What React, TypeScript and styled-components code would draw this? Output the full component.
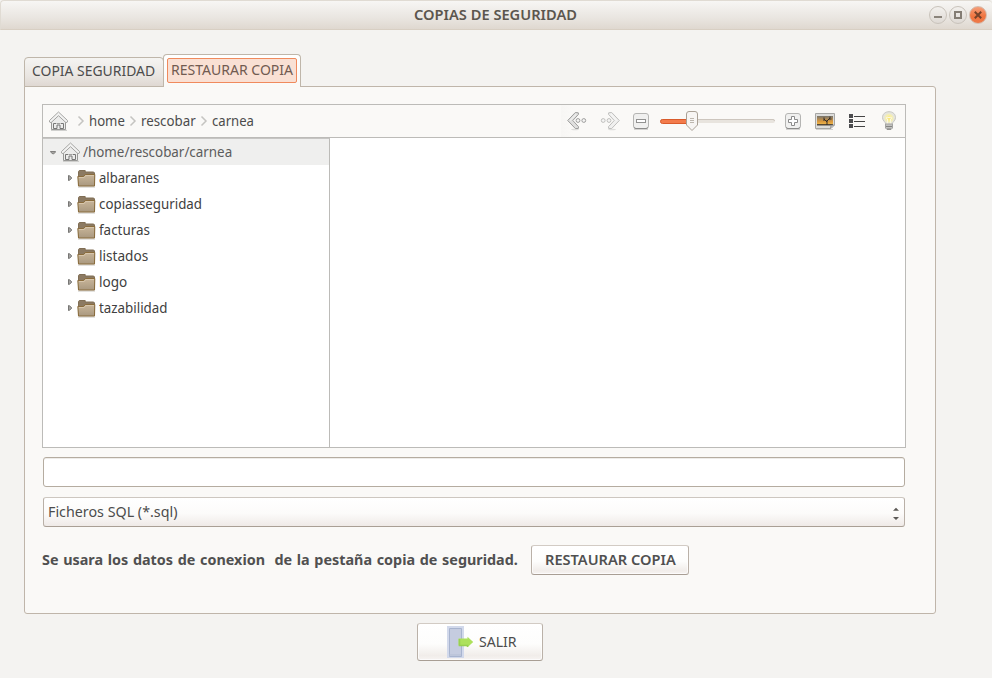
import React, { useLayoutEffect, useRef } from 'react';
import styled, { createGlobalStyle } from 'styled-components';

const GlobalStyle = createGlobalStyle`
  * { box-sizing: border-box; }
  body { margin: 0; background: #f4f3f1; font-family: "Noto Sans", "Open Sans", sans-serif; font-size: 15px; color: #4c4c4c; }
  button { font: inherit; color: inherit; padding: 0; margin: 0; }
  svg { display: block; flex: none; }
`;

const FitBox = styled.span<{ $w: number }>`
  display: block;
  flex: none;
  width: ${p => p.$w}px;
  height: 20px;
  line-height: 18px;
  white-space: pre;
`;
const FitInner = styled.span`
  display: inline-block;
  transform-origin: 0 50%;
`;

/* Keeps a label at a fixed advance width by condensing its glyphs. */
function Label({ w, children }: { w: number; children: string }) {
  const ref = useRef<HTMLSpanElement>(null);
  useLayoutEffect(() => {
    const el = ref.current;
    if (el) el.style.transform = `scaleX(${w / el.offsetWidth})`;
  }, [w, children]);
  return <FitBox $w={w}><FitInner ref={ref}>{children}</FitInner></FitBox>;
}

const Window = styled.main`
  width: 992px;
  height: 678px;
  overflow: hidden;
  display: flex;
  flex-direction: column;
  background: #f4f3f1;
`;
const TitleBar = styled.header`
  height: 30px;
  flex: none;
  display: grid;
  grid-template-columns: 413px 1fr auto;
  align-items: center;
  padding-right: 5px;
  border: 1px solid #e0dbd3;
  border-width: 1px 0 1px 1px;
  border-bottom-color: #d8cfc3;
  border-radius: 4px 4px 0 0;
  background: linear-gradient(#f7f6f4, #e9e5e0 62%, #dfd8d0);
  font-weight: 600;
  color: #5b564e;
`;
const TitleText = styled.div`grid-column: 2;`;
const Controls = styled.div`display: flex; gap: 2px;`;
const Control = styled.button<{ $close?: boolean }>`
  width: 18px;
  height: 18px;
  display: grid;
  place-items: center;
  border-radius: 50%;
  border: 1px solid ${p => (p.$close ? '#d5bcad' : '#c9c3bb')};
  background: ${p => (p.$close ? 'linear-gradient(#f59e79, #f0743f 60%, #ee7a4a)' : 'linear-gradient(#f2f0ed, #dfdad5)')};
`;

const Body = styled.div`padding: 24px 0 0 24px;`;
const Tabs = styled.div`
  display: flex;
  align-items: flex-end;
  height: 33px;
  margin-bottom: -1px;
  position: relative;
`;
const Tab = styled.button<{ $active?: boolean }>`
  width: ${p => (p.$active ? 138 : 140)}px;
  height: ${p => (p.$active ? 33 : 30)}px;
  margin-left: ${p => (p.$active ? -1 : 0)}px;
  padding: ${p => (p.$active ? '3px 0 0 3px' : '3px 0 0 7px')};
  text-align: left;
  display: flex;
  align-items: flex-start;
  border: 1px solid #bfb6aa;
  border-bottom: ${p => (p.$active ? 'none' : '1px solid #bfb6aa')};
  border-radius: 4px 4px 0 0;
  background: ${p => (p.$active ? 'linear-gradient(#fff, #faf9f7)' : 'linear-gradient(#f5f4f2, #e9e5e1 65%, #dfd8d2)')};
`;
const FocusRing = styled.span`
  width: 130px;
  height: 25px;
  padding: 1px 0 0 3px;
  border: 1px solid #f08a5d;
  border-radius: 2px;
  background: #f9e0d4;
  color: #715b51;
`;
const Panel = styled.section`
  width: 912px;
  height: 528px;
  padding: 17px;
  border: 1px solid #bfb5aa;
  border-radius: 0 3px 3px 3px;
  background: #faf9f7;
`;
const Chooser = styled.div`
  width: 864px;
  height: 344px;
  border: 1px solid #bcbbb8;
  background: #fff;
`;
const Toolbar = styled.div`
  height: 33px;
  display: flex;
  justify-content: space-between;
  background: #faf9f7;
  border-bottom: 1px solid #bcbbb8;
`;
const Crumbs = styled.nav`
  display: flex;
  align-items: center;
  padding-left: 6px;
`;
const Crumb = styled.span`margin: 0 4px 0 4px;`;
const HomeCrumb = styled.span`margin-right: 8px;`;
const Tools = styled.div`
  width: 344px;
  padding-left: 6px;
  display: grid;
  grid-template-columns: 33px 32px 27px 125px 31px 34px 32px 16px;
  align-items: center;
  background: linear-gradient(90deg, #f7f6f4, #faf9f7 12px);
`;
const Split = styled.div`
  display: grid;
  grid-template-columns: 287px 1fr;
  height: 309px;
`;
const Tree = styled.div`
  border-right: 1px solid #bcbbb8;
  border-top: 1px solid #c6c5c3;
`;
const Row = styled.div<{ $root?: boolean }>`
  height: 26px;
  display: flex;
  align-items: center;
  padding-left: ${p => (p.$root ? 6 : 24)}px;
  gap: ${p => (p.$root ? 3 : 2)}px;
  background: ${p => (p.$root ? '#efefee' : 'transparent')};
  color: ${p => (p.$root ? '#5c5c5c' : '#404040')};
`;
const TreeLabel = styled.span<{ $root?: boolean }>`margin-left: ${p => (p.$root ? -1 : 1)}px;`;
const Field = styled.input`
  display: block;
  width: 862px;
  height: 30px;
  margin: 9px 0 10px 1px;
  border: 1px solid #b5aca0;
  border-radius: 3px;
  background: #fff;
  outline: none;
  box-shadow: inset 0 1px #eeece9;
`;
const Select = styled.button`
  width: 862px;
  height: 30px;
  margin-left: 1px;
  padding: 0 4px 1px 4px;
  display: flex;
  justify-content: space-between;
  align-items: center;
  text-align: left;
  border: 1px solid #b9b0a7;
  border-top-color: #cdc7c0;
  border-bottom-color: #a99f95;
  border-radius: 3px;
  background: linear-gradient(#fff 0, #fcfbfa 55%, #efeae7);
`;
const SpinBox = styled.span`padding-top: 4px;`;
const Actions = styled.div`
  display: flex;
  align-items: center;
  margin-top: 18px;
  gap: 13px;
  color: #505050;
`;
const Notice = styled.div`
  font-weight: 700;
  word-spacing: 1px;
`;
const PushButton = styled.button<{ $w: number; $h: number; $strong?: boolean }>`
  width: ${p => p.$w}px;
  height: ${p => p.$h}px;
  display: flex;
  align-items: center;
  justify-content: ${p => (p.$strong ? 'center' : 'flex-start')};
  padding: ${p => (p.$strong ? '0' : '0 0 0 29px')};
  gap: 5px;
  text-align: left;
  font-weight: ${p => (p.$strong ? 600 : 400)};
  border: 1px solid #bab1a8;
  border-top-color: #d2cbc4;
  border-bottom-color: #a89e94;
  border-radius: 3px;
  background: linear-gradient(#fff, #fdfdfc 55%, #f1edea 88%, #f7f4f2);
  box-shadow: inset 0 0 0 1px #ffffffb0;
`;
const Footer = styled.footer`padding: 9px 0 0 393px;`;

const HomeIcon = () => (
  <svg width="20" height="20" viewBox="0 0 20 20" fill="none">
    <path d="M2 19.300H18" stroke="#c6c6c4" />
    <path d="M2.500 10.500V18.500H16.500V10.500L9.500 4.500Z" fill="#ececeb" stroke="#979795" />
    <path d="M.5 11V9.500L9.500 1l9 8.500V11l-1.500.7-7.500-7-7.500 7Z" fill="#f2f2f1" stroke="#a5a5a3" />
    <path d="M4.500 17.500h3.500v-3.500h3v3.500h3.500v-5h-2.500M4.500 17.500v-5h2.500" stroke="#777776" />
    <path d="M7.500 12.500h4" stroke="#a0a09e" />
  </svg>
);
const Chevron = () => (
  <svg width="8" height="12" viewBox="0 0 8 12" fill="none" stroke="#c5c4c1" strokeWidth="1.5"><path d="M1.500 1.500 6 6 1.500 10.500" /></svg>
);
const FolderIcon = () => (
  <svg width="19" height="19" viewBox="0 0 19 19">
    <defs><linearGradient id="folder" x1="0" y1="0" x2="0" y2="1"><stop stopColor="#c9b69a" /><stop offset="1" stopColor="#a9987f" /></linearGradient></defs>
    <path d="M1 18h17" stroke="#c8c5c0" />
    <path d="M1.500 16.500v-14l.8-1h5.900v1.500h8.500l.8 1v12.500Z" fill="#8c7a62" stroke="#806e55" strokeLinejoin="round" />
    <path d="M.8 7.500h5.900l1.500-2h9.600L17.500 17h-16Z" fill="url(#folder)" stroke="#8a6c3c" strokeLinejoin="round" />
    <path d="M2 8.500h5.200l1.500-2H17" fill="none" stroke="#d7c6ac" />
  </svg>
);
const Expander = ({ open }: { open?: boolean }) => open ? (
  <svg width="9" height="7" viewBox="0 0 9 7"><path d="M1.500 2.500h5v.5L4.500 5H4L1.500 3Z" fill="#a5a4a2" stroke="#81807e" /></svg>
) : (
  <svg width="8" height="8" viewBox="0 0 8 8"><path d="M1.500 1.500H2L4.500 3.500v1L2 6.500h-.5Z" fill="#a5a4a2" stroke="#777674" /></svg>
);
const ArrowIcon = ({ forward }: { forward?: boolean }) => (
  <svg width="20" height="20" viewBox="0 0 20 20" fill="#f5f5f4" stroke={forward ? '#bfbfbd' : '#9e9e9d'}>
    <g transform={forward ? 'translate(20 0) scale(-1 1)' : undefined}>
      <ellipse cx="8" cy="18.500" rx="4" ry=".7" stroke="none" fill="#dededc" />
      <path d="M.7 9.500 8.300 1.500l3 .3.200 1.500-5.700 6.200 5.700 6.200-.2 1.800H8.300Z" fill={forward ? '#f0f0ef' : '#dfdfde'} strokeLinejoin="round" />
      <path d="M3 9.500 9.300 3.300" fill="none" stroke="#f8f8f7" />
      <circle cx="11" cy="9.500" r="1.900" /><circle cx="16.800" cy="9.500" r="1.900" />
    </g>
  </svg>
);
const ZoomIcon = ({ plus }: { plus?: boolean }) => (
  <svg width="18" height="18" viewBox="0 0 18 18">
    <path d="M2 17.500h14" stroke="#d4d3d1" />
    <rect x="1.500" y="1.500" width="15" height="15" rx="2.500" fill="#f0f0ef" stroke="#b5b5b3" />
    <path d="M2 15.500q1 1 2 1h10q1 0 2-1" fill="none" stroke="#8c8c8b" />
    {plus ? <path d="M7.500 4.500h3v3h3v3h-3v3h-3v-3h-3v-3h3Z" fill="#fff" stroke="#8b8b8b" />
      : <rect x="4.500" y="7.500" width="9" height="3" fill="#fff" stroke="#929291" />}
  </svg>
);
const SliderIcon = () => (
  <svg width="117" height="24" viewBox="0 0 117 24">
    <rect x="1" y="10" width="115" height="4" rx="2" fill="#e8e4de" />
    <path d="M2 10.500h112q1.500 0 1.500 1.500" fill="none" stroke="#cdc6be" />
    <rect x="1.500" y="10.500" width="32" height="4" rx="2" fill="#f37b4b" stroke="#d95b2b" />
    <path d="M27.500 5q0-2.500 2.500-2.500h6q2.500 0 2.500 2.500v11L33 21.500 27.500 16Z" fill="#f7f5f3" stroke="#aaa196" />
    <path d="M31 9.500h4M31 11.500h4M31 13.500h4" stroke="#bdb7ae" />
  </svg>
);
const PhotoIcon = () => (
  <svg width="20" height="18" viewBox="0 0 20 18">
    <defs><linearGradient id="sunset" x1="0" y1="0" x2="0" y2="1"><stop stopColor="#77756f" /><stop offset=".6" stopColor="#d9983e" /><stop offset="1" stopColor="#f2bd4d" /></linearGradient></defs>
    <path d="M1 17.500h17" stroke="#d3d2d0" />
    <path d="M.5 1.500h19V13L16 16.500H.5Z" fill="#dddddb" stroke="#a6a6a4" />
    <path d="M2 4h16v9H2Z" fill="url(#sunset)" />
    <path d="M2 12h16v1.500H2Z" fill="#54493a" />
    <path d="M12 13V8M12 10 9 7V5.500M12 9l3-3V4.500M14 7h2.500M10 8H8" stroke="#342f29" fill="none" />
    <path d="m15.500 16.500.5-3 3.500-.5" fill="#bcbcba" stroke="#999" />
  </svg>
);
const ListIcon = () => (
  <svg width="16" height="16" viewBox="0 0 16 16" shapeRendering="crispEdges">
    {[1, 6, 11].map(y => <g key={y}><rect y={y} width="4" height="4" fill="#4d4d4f" /><rect x="5" y={y + 2} width="11" height="1" fill="#454545" /></g>)}
  </svg>
);
const BulbIcon = () => (
  <svg width="16" height="20" viewBox="0 0 16 20">
    <defs><radialGradient id="glow"><stop stopColor="#fbe670" /><stop offset=".5" stopColor="#f7f0ad" /><stop offset=".8" stopColor="#e5e5de" /></radialGradient></defs>
    <path d="M8 .7C4 .7 1.500 3.300 1.500 6.500c0 3.500 3 4 3.500 7.200h6c.5-3.200 3.500-3.700 3.500-7.200C14.500 3.300 12 .7 8 .7Z" fill="url(#glow)" stroke="#c6c6c0" />
    <path d="M6.500 13V8L5 7l2-1 1 1 1-1 2 1-1.500 1v5" fill="none" stroke="#fbf7e2" />
    <path d="M4.500 13h7v4L10 18.500H6L4.500 17Z" fill="#c2c2c0" stroke="#a3a3a1" /><path d="M5 15.500h6M6 18h4" stroke="#858583" />
  </svg>
);
const SpinArrows = () => (
  <svg width="8" height="14" viewBox="0 0 8 14" fill="#5b5956"><path d="M1 3.700 4 .8l3 2.900ZM1 10h6L4 13Z" /></svg>
);
const ExitIcon = () => (
  <svg width="27" height="32" viewBox="0 0 27 32">
    <path d="M0 0h17v32H0Z" fill="#d2d9eb" /><path d="M2.500 2.500h12v28h-12Z" fill="#c5cce0" stroke="#a8b4cf" /><path d="M2 29h12" stroke="#b5bfd5" />
    <path d="M11.500 12.500h9v-1.700l5.700 5.200-5.700 5.200v-1.700h-9Z" fill="#ade15c" />
    <path d="M12.500 13v6.500h8v1.500" fill="none" stroke="#99d052" strokeWidth="1.500" />
  </svg>
);

const crumbs: [string, number][] = [['home', 36], ['rescobar', 55], ['carnea', 42]];
const folders: [string, number][] = [['albaranes', 60], ['copiasseguridad', 103], ['facturas', 51], ['listados', 49], ['logo', 28], ['tazabilidad', 68.5]];

export default function App() {
  return (
    <Window>
      <GlobalStyle />
      <TitleBar>
        <TitleText><Label w={163}>COPIAS DE SEGURIDAD</Label></TitleText>
        <Controls>
          <Control aria-label="Minimizar"><svg width="8" height="8"><path d="M0 6h8" stroke="#8a847b" strokeWidth="2" /></svg></Control>
          <Control aria-label="Maximizar"><svg width="8" height="8"><path d="M1 1h6v6H1Z" fill="none" stroke="#847d74" strokeWidth="2" /></svg></Control>
          <Control $close aria-label="Cerrar"><svg width="8" height="8"><path d="m.8.8 6.400 6.400M7.200.8.8 7.200" stroke="#75422a" strokeWidth="2" /></svg></Control>
        </Controls>
      </TitleBar>
      <Body>
        <Tabs>
          <Tab><Label w={123.5}>COPIA SEGURIDAD</Label></Tab>
          <Tab $active><FocusRing><Label w={122.5}>RESTAURAR COPIA</Label></FocusRing></Tab>
        </Tabs>
        <Panel>
          <Chooser>
            <Toolbar>
              <Crumbs>
                <HomeCrumb><HomeIcon /></HomeCrumb>
                {crumbs.map(([name, w]) => <React.Fragment key={name}><Chevron /><Crumb><Label w={w}>{name}</Label></Crumb></React.Fragment>)}
              </Crumbs>
              <Tools>
                <ArrowIcon /><ArrowIcon forward /><ZoomIcon /><SliderIcon /><ZoomIcon plus /><PhotoIcon /><ListIcon /><BulbIcon />
              </Tools>
            </Toolbar>
            <Split>
              <Tree>
                <Row $root><Expander open /><HomeIcon /><TreeLabel $root><Label w={149}>/home/rescobar/carnea</Label></TreeLabel></Row>
                {folders.map(([name, w]) => <Row key={name}><Expander /><FolderIcon /><TreeLabel><Label w={w}>{name}</Label></TreeLabel></Row>)}
              </Tree>
            </Split>
          </Chooser>
          <Field aria-label="Nombre" />
          <Select><Label w={129.5}>Ficheros SQL (*.sql)</Label><SpinBox><SpinArrows /></SpinBox></Select>
          <Actions>
            <Notice><Label w={476}>{'Se usara los datos de conexion  de la pestaña copia de seguridad.'}</Label></Notice>
            <PushButton $w={158} $h={30} $strong><Label w={130.5}>RESTAURAR COPIA</Label></PushButton>
          </Actions>
        </Panel>
        <Footer><PushButton $w={126} $h={38}><ExitIcon /><Label w={37.5}>SALIR</Label></PushButton></Footer>
      </Body>
    </Window>
  );
}
